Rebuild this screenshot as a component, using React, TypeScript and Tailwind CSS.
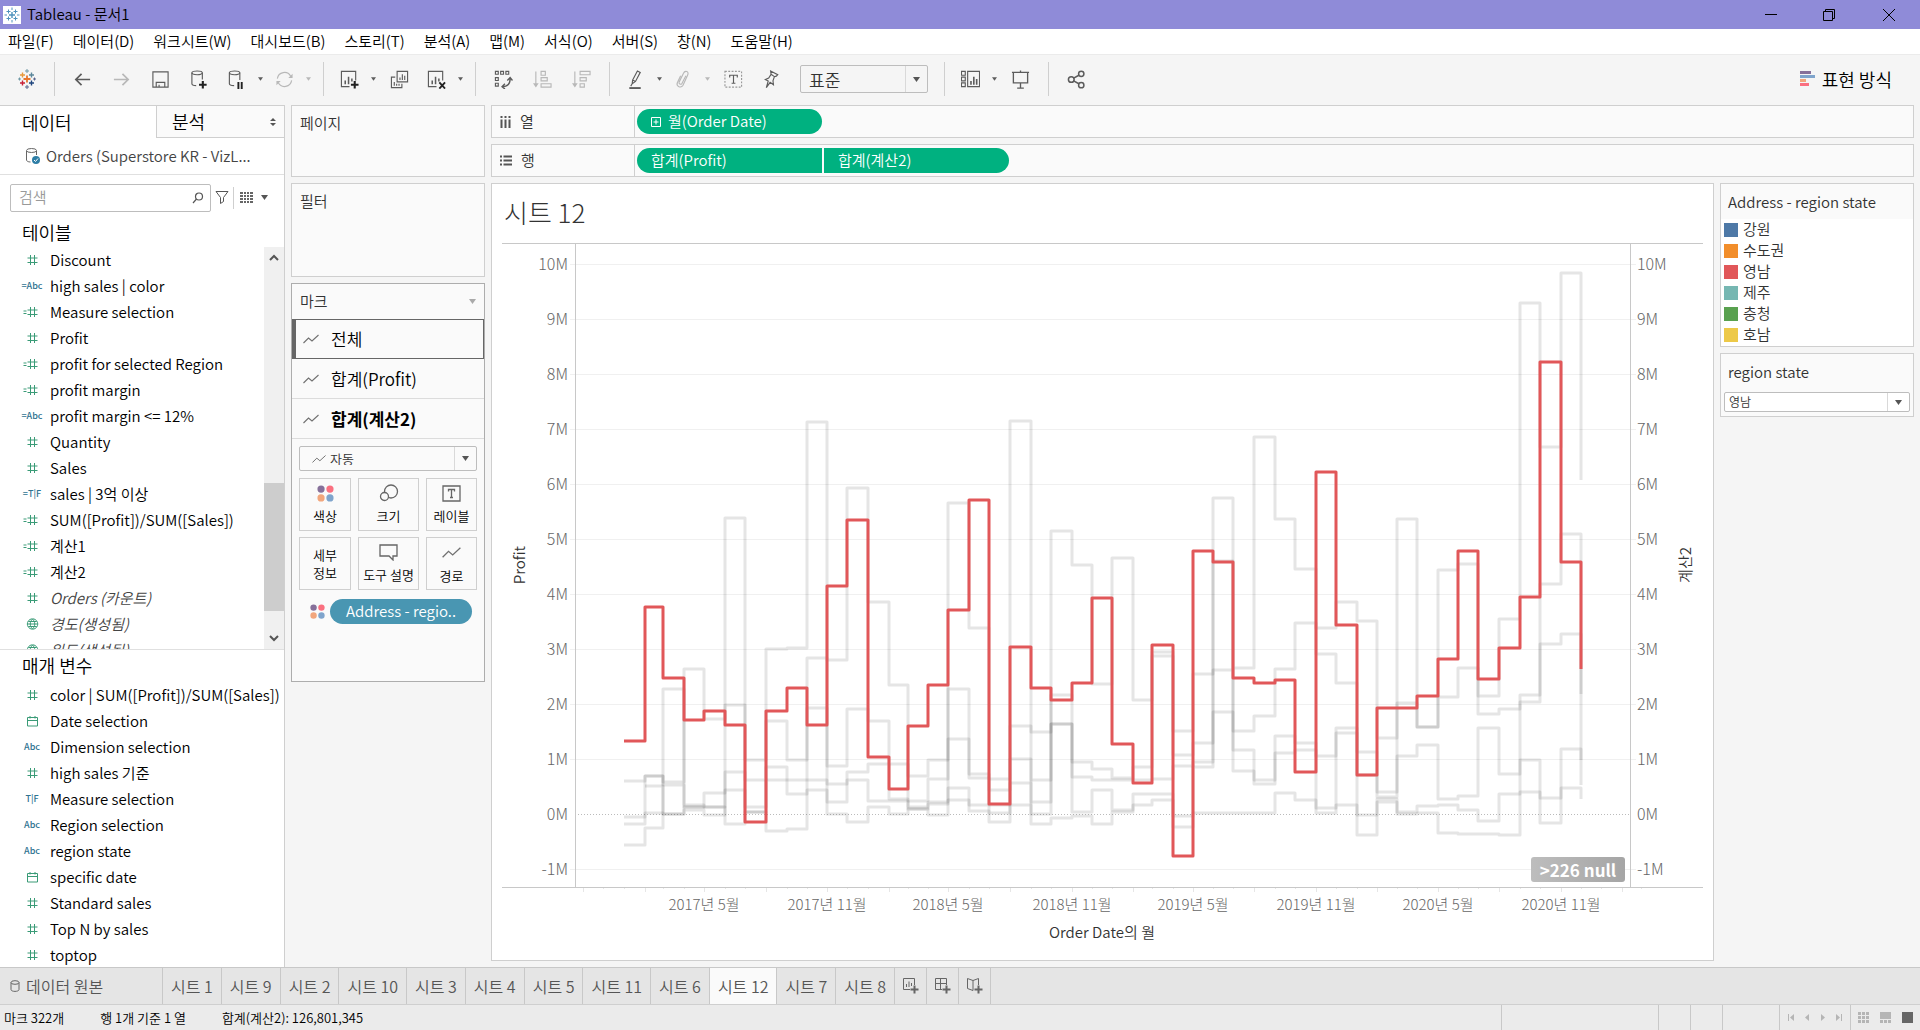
// App.tsx - Tableau-style worksheet: data pane, shelves, marks card and a dual-axis step chart.
import type { ReactNode } from "react";

const menus = [
  "파일(F)", "데이터(D)", "워크시트(W)", "대시보드(B)", "스토리(T)", "분석(A)",
  "맵(M)", "서식(O)", "서버(S)", "창(N)", "도움말(H)",
];

type FieldKind = "num" | "calcNum" | "abc" | "calcAbc" | "tf" | "calcTf" | "date" | "geo";
type Field = { kind: FieldKind; name: string; generated?: boolean };

const tableFields: Field[] = [
  { kind: "num", name: "Discount" },
  { kind: "calcAbc", name: "high sales | color" },
  { kind: "calcNum", name: "Measure selection" },
  { kind: "num", name: "Profit" },
  { kind: "calcNum", name: "profit for selected Region" },
  { kind: "calcNum", name: "profit margin" },
  { kind: "calcAbc", name: "profit margin <= 12%" },
  { kind: "num", name: "Quantity" },
  { kind: "num", name: "Sales" },
  { kind: "calcTf", name: "sales | 3억 이상" },
  { kind: "calcNum", name: "SUM([Profit])/SUM([Sales])" },
  { kind: "calcNum", name: "계산1" },
  { kind: "calcNum", name: "계산2" },
  { kind: "num", name: "Orders (카운트)", generated: true },
  { kind: "geo", name: "경도(생성됨)", generated: true },
  { kind: "geo", name: "위도(생성됨)", generated: true },
];

const parameters: Field[] = [
  { kind: "num", name: "color | SUM([Profit])/SUM([Sales])" },
  { kind: "date", name: "Date selection" },
  { kind: "abc", name: "Dimension selection" },
  { kind: "num", name: "high sales 기준" },
  { kind: "tf", name: "Measure selection" },
  { kind: "abc", name: "Region selection" },
  { kind: "abc", name: "region state" },
  { kind: "date", name: "specific date" },
  { kind: "num", name: "Standard sales" },
  { kind: "num", name: "Top N by sales" },
  { kind: "num", name: "toptop" },
];

const regions = [
  { name: "강원", swatch: "bg-[#4e79a7]" },
  { name: "수도권", swatch: "bg-[#f28e2b]" },
  { name: "영남", swatch: "bg-[#e15759]" },
  { name: "제주", swatch: "bg-[#76b7b2]" },
  { name: "충청", swatch: "bg-[#59a14f]" },
  { name: "호남", swatch: "bg-[#edc948]" },
];

const sheets = ["1", "9", "2", "10", "3", "4", "5", "11", "6", "12", "7", "8"];

// Monthly values in millions, January 2017 to December 2020.
const selectedRegion = [
  1.32, 3.76, 2.47, 1.7, 1.87, 1.62, -0.14, 1.87, 2.3, 1.62, 4.15, 5.34,
  1.04, 0.45, 1.6, 2.35, 3.7, 5.7, 0.19, 3.04, 2.3, 2.07, 2.39, 3.93,
  1.27, 0.57, 3.07, -0.77, 4.78, 4.58, 2.47, 2.39, 2.43, 0.76, 6.22, 3.44,
  0.7, 1.93, 1.93, 2.15, 2.82, 4.79, 2.45, 3.01, 3.95, 8.21, 4.58, 2.64,
];

const otherRegions: (number | null)[][] = [
  [
    0.6, 0.69, 0.58, 2.64, 1.73, 5.39, 0.99, 3.0, 3.01, 7.13, 0.87, 1.91,
    1.69, 0.91, 0.69, 0.98, 5.65, 3.39, 0.64, 7.14, 1.49, 5.15, 4.52, 2.36,
    4.66, 2.07, 2.95, 1.51, 2.54, 5.75, 2.65, 6.85, 5.36, 4.45, 3.39, 3.86,
    3.5, 1.38, 5.36, 1.59, 4.44, 4.55, 2.15, 3.55, 9.29, 6.67, 9.83, 6.08,
  ],
  [
    -0.56, -0.25, 2.27, 0.13, 0.39, 1.98, 0.62, 1.69, 0.98, 2.83, 2.8, 5.93,
    3.85, 2.34, 0.24, 0.64, 2.27, 0.73, 0.43, 1.6, 0.62, 2.17, 0.94, 0.81,
    0.65, 0.85, 2.87, 1.07, 1.29, 4.6, 1.51, 1.78, 2.64, 3.48, 2.91, 2.39,
    1.13, 0.4, 2.02, 1.59, 2.13, 2.65, 1.82, 1.91, 2.17, 4.19, 5.09, 2.19,
  ],
  [
    -0.18, 0.69, 0.52, 0.17, 0.13, 0.76, 0.13, 0.85, 0.36, 1.92, 0.54, 0.76,
    0.91, 0.27, 0.13, 0.21, 1.36, 0.65, 0.16, 1.0, 0.21, 1.64, 0.67, 0.61,
    0.61, 0.61, 0.63, 0.87, 0.94, 2.62, 1.16, 0.62, 1.41, 1.29, 1.05, 1.56,
    0.7, 0.31, 1.05, 1.25, 0.28, 0.33, 1.56, 0.72, 2.04, 3.09, 3.27, 0.99,
  ],
  [
    -0.05, 0.02, 0, 0.07, -0.02, 0.43, 0.04, 0.62, 0.62, 0.62, 0.21, 0.61,
    0.24, 0.24, 0.09, 0.19, 0.47, 0.16, 0.02, 0.56, 0, 1.64, 0.04, 0.43,
    0.07, 0.36, 0.36, -0.04, 0.85, 1.86, 0.78, 0.54, 1.1, 1.16, 0.11, 1.48,
    -0.02, 0.27, 0.04, 0.14, 0.16, 0.07, -0.13, 0.36, 0.98, 0.29, 1.19, 0.53,
  ],
  [
    null, 0.5, 0, 0.13, 0.13, -0.18, 0.04, -0.31, -0.28, 0.43, 0, -0.14,
    0.13, 0, 0.09, -0.02, 0.25, 0.05, -0.14, 0.17, -0.18, -0.08, -0.04, -0.18,
    0.03, 0.16, 0.26, -0.24, 0.02, 0.02, 0.02, 0.02, 0.38, 0.25, 0.02, 0.16,
    -0.38, 0.22, 0, 0.02, -0.35, -0.37, -0.37, -0.38, 0.4, -0.16, 0.47, 0.27,
  ],
];

const PLOT = { left: 73, right: 1128, bottom: 644, zero: 571, perMillion: 55 };
const DAY_MS = 86400000;
const monthX = (m: number) =>
  122 + Math.round(((Date.UTC(2017, m, 1) - Date.UTC(2017, 0, 1)) / DAY_MS) * 0.669);
const valueY = (v: number) => PLOT.zero - Math.round(v * PLOT.perMillion);

function stepPath(values: (number | null)[]) {
  let d = "";
  values.forEach((v, m) => {
    if (v === null) return;
    d += d === "" ? `M${monthX(m)} ${valueY(v)}` : `H${monthX(m)}V${valueY(v)}`;
  });
  return d;
}

function Caret({ small, className = "text-[#555]" }: { small?: boolean; className?: string }) {
  return (
    <svg width={small ? 5 : 7} height={small ? 4 : 5} viewBox="0 0 7 5" className={className} aria-hidden="true">
      <path d="M0 0h7L3.5 5z" fill="currentColor" />
    </svg>
  );
}

function Stroke({ children }: { children: ReactNode }) {
  return (
    <svg width="19" height="19" viewBox="0 0 20 20" fill="none" stroke="currentColor" strokeWidth="1.2" aria-hidden="true">
      {children}
    </svg>
  );
}

function ToolButton({ label, off, children }: { label: string; off?: boolean; children: ReactNode }) {
  return (
    <button aria-label={label} className={`flex h-8 w-[39px] items-center justify-center ${off ? "text-[#b8b8b8]" : "text-[#5c5c5c]"}`}>
      {children}
    </button>
  );
}

function SplitButton({ label, off, children }: { label: string; off?: boolean; children: ReactNode }) {
  return (
    <div className={`flex h-8 items-center ${off ? "text-[#b8b8b8]" : "text-[#5c5c5c]"}`}>
      <button aria-label={label} className="flex w-[34px] items-center justify-center">{children}</button>
      <button aria-label={`${label} 메뉴`} className="flex w-[14px] items-center justify-center">
        <Caret small className="text-current" />
      </button>
    </div>
  );
}

function Divider() {
  return <div className="mx-2 h-[34px] w-px bg-[#cfcfcf]" />;
}

function TableauMark() {
  return (
    <svg width="18" height="20" viewBox="0 0 18 20" strokeWidth="1.4" fill="none" aria-hidden="true">
      <path d="M9 6.5v7M5.5 10h7" stroke="#e8762d" strokeWidth="1.8" />
      <path d="M4.5 3.5v5M2 6h5" stroke="#e89a3c" />
      <path d="M13.5 3.5v5M11 6h5" stroke="#5b879b" />
      <path d="M4.5 11.5v5M2 14h5" stroke="#c72037" />
      <path d="M13.5 11.5v5M11 14h5" stroke="#1f457e" />
      <path d="M9 0v4M7 2h4M0 10h3M1.5 8.5v3" stroke="#7099a6" strokeWidth="1" />
      <path d="M9 16v4M7 18h4M15 10h3M16.5 8.5v3" stroke="#59658c" strokeWidth="1" />
    </svg>
  );
}

function ColorDots({ size }: { size: number }) {
  return (
    <svg width={size} height={size} viewBox="0 0 16 16" aria-hidden="true">
      <circle cx="3.8" cy="3.8" r="3.4" fill="#86709a" />
      <circle cx="12.2" cy="3.8" r="3.4" fill="#fa7080" />
      <circle cx="3.8" cy="12.2" r="3.4" fill="#f2a67c" />
      <circle cx="12.2" cy="12.2" r="3.4" fill="#7fa4cc" />
    </svg>
  );
}

function LineMark({ size = 16 }: { size?: number }) {
  return (
    <svg width={size} height={size} viewBox="0 0 16 16" fill="none" stroke="#707070" strokeWidth="1.1" aria-hidden="true">
      <path d="M.5 12l5-5 3.5 3 6.500-6" />
    </svg>
  );
}

function FieldIcon({ kind }: { kind: FieldKind }) {
  const calc = kind === "calcNum" || kind === "calcAbc" || kind === "calcTf";
  if (kind === "abc" || kind === "calcAbc" || kind === "tf" || kind === "calcTf") {
    const text = kind === "abc" || kind === "calcAbc" ? "Abc" : "T|F";
    return (
      <span className="w-6 text-center text-[9px] font-medium whitespace-nowrap text-[#2f7391]">
        {calc ? "=" : ""}
        {text}
      </span>
    );
  }
  return (
    <svg width="24" height="12" viewBox="0 0 24 12" fill="none" stroke="#3a9b77" strokeWidth="1" aria-hidden="true">
      {(kind === "num" || kind === "calcNum") && <path d="M10.5 1v10M14.5 1v10M7.5 4h10M7.5 8.5h10" />}
      {kind === "calcNum" && <path d="M3.5 5h3M3.5 7.5h3" />}
      {kind === "date" && <path d="M7.5 2.5h10v8.500h-10zM7.5 5.5h10M10 1v2.500M15 1v2.500" />}
      {kind === "geo" && <path d="M12.5 .8a5.200 5.200 0 1 0 .1 0M7.5 6h10M8.300 3.500h8.400M8.300 8.500h8.400M12.500 1c-3 3-3 7 0 10c3-3 3-7 0-10" />}
    </svg>
  );
}

function FieldList({ fields }: { fields: Field[] }) {
  return (
    <ul>
      {fields.map((field) => (
        <li key={field.name} className="flex h-[26px] items-center gap-1 pl-5">
          <span className="flex w-6 justify-center">
            <FieldIcon kind={field.kind} />
          </span>
          <span className={`pl-[2px] whitespace-nowrap ${field.generated ? "text-[#444] italic" : ""}`}>{field.name}</span>
        </li>
      ))}
    </ul>
  );
}

function TitleBar() {
  return (
    <header className="flex h-[29px] shrink-0 items-center justify-between bg-[#8f8bd8]">
      <div className="flex items-center gap-[6px] pl-[3px] text-[15px]">
        <span className="flex size-[18px] items-center justify-center bg-white">
          <svg width="16" height="16" viewBox="0 0 16 16" fill="none" stroke="#4f93bd" strokeWidth="1" aria-hidden="true">
            <path d="M8 5v6M5 8h6" strokeWidth="1.4" />
            <path d="M4.5 2.5v4M2.5 4.5h4M11.5 2.5v4M9.5 4.5h4M4.5 9.5v4M2.5 11.5h4M11.5 9.5v4M9.5 11.5h4M8 .5v2.500M8 13v2.500M.5 8h2.500M13 8h2.500" />
          </svg>
        </span>
        <h1>Tableau - 문서1</h1>
      </div>
      <div className="flex">
        <button aria-label="최소화" className="flex h-[29px] w-[58px] items-center justify-center">
          <svg width="12" height="12" stroke="#000" aria-hidden="true"><path d="M0 5.5h12" /></svg>
        </button>
        <button aria-label="이전 크기로 복원" className="flex h-[29px] w-[58px] items-center justify-center">
          <svg width="12" height="12" fill="none" stroke="#000" aria-hidden="true">
            <path d="M.5 2.5h9v9h-9zM2.5 2.5v-2h9v9h-2" />
          </svg>
        </button>
        <button aria-label="닫기" className="flex h-[29px] w-[62px] items-center justify-center">
          <svg width="12" height="12" stroke="#000" aria-hidden="true"><path d="M0 0l12 12M12 0L0 12" /></svg>
        </button>
      </div>
    </header>
  );
}

function Toolbar() {
  return (
    <div role="toolbar" className="flex h-[51px] shrink-0 items-center border-t border-[#ebebeb] pb-[2px] pl-[7px]">
      <ToolButton label="시작 페이지"><TableauMark /></ToolButton>
      <Divider />
      <ToolButton label="실행 취소">
        <Stroke><path d="M18 10H3M9 4l-6 6 6 6" strokeWidth="1.8" /></Stroke>
      </ToolButton>
      <ToolButton label="다시 실행" off>
        <Stroke><path d="M2 10h15M11 4l6 6-6 6" strokeWidth="1.8" /></Stroke>
      </ToolButton>
      <ToolButton label="저장">
        <Stroke><path d="M2 2h16v16H2zM5.500 18v-5h9v5M8.500 18v-2.500" /></Stroke>
      </ToolButton>
      <ToolButton label="새 데이터 원본">
        <Stroke>
          <ellipse cx="7.500" cy="3" rx="5.500" ry="2" />
          <path d="M2 3v11.500c0 1.200 2 2 4.500 2M13 3v7" />
          <path d="M13.500 11.500v8M9.500 15.500h8" stroke="#222" strokeWidth="2.200" />
        </Stroke>
      </ToolButton>
      <SplitButton label="자동 업데이트 일시 중지">
        <Stroke>
          <ellipse cx="8" cy="3" rx="5.500" ry="2" />
          <path d="M2.500 3v11.500c0 1.200 2 2 5 2M13.500 3v7.500" />
          <path d="M12 12.500v7.500M15.500 12.500v7.500" stroke="#222" strokeWidth="2" />
        </Stroke>
      </SplitButton>
      <SplitButton label="업데이트 실행" off>
        <Stroke>
          <path d="M2.500 9a7.500 7.500 0 0 1 14-2.500M17.500 11a7.500 7.500 0 0 1-14 2.500" />
          <path d="M18.500 4v4.500H14zM1.500 16v-4.500H6z" fill="currentColor" stroke="none" />
        </Stroke>
      </SplitButton>
      <Divider />
      <SplitButton label="새 워크시트">
        <Stroke>
          <path d="M10 17.500H1.500v-16h15V11" />
          <path d="M5.500 15v-4M9 15V7M12.500 12V9" strokeWidth="1.600" />
          <path d="M15.500 11.500v8M11.500 15.500h8" stroke="#222" strokeWidth="2.200" />
        </Stroke>
      </SplitButton>
      <ToolButton label="복제">
        <Stroke>
          <path d="M7.500 1.500h11v11h-11zM5.500 7.500H1.500v11h11V14.500" />
          <path d="M10.500 10.500V8M13 10.500V4.500M15.500 10.500V6M4.500 16.500v-4M7 16.500v-2M9.500 16.500v-2" />
        </Stroke>
      </ToolButton>
      <SplitButton label="시트 지우기">
        <Stroke>
          <path d="M10 17.500H1.500v-16h15V11" />
          <path d="M5.500 15v-4M9 15V7M12.500 12V9" strokeWidth="1.600" />
          <path d="M13 13l6 6.500M19 13l-6 6.500" stroke="#222" strokeWidth="2" />
        </Stroke>
      </SplitButton>
      <Divider />
      <ToolButton label="행과 열 바꾸기">
        <Stroke>
          <path d="M1.500 1.500h3v3h-3zM7 1.500h3v3H7zM12.500 1.500h3v3h-3zM1.500 8h3v3h-3zM1.500 14h3v3h-3z" />
          <path d="M17 9c0 5-2.500 8.500-8 8.500M14 11l3-3 2.500 3M11.500 14.500l-3 3 3 2.500" strokeWidth="1.500" />
        </Stroke>
      </ToolButton>
      <ToolButton label="오름차순 정렬" off>
        <Stroke>
          <path d="M3 1.500v14M8.500 1.500h4.500v4H8.500zM8.500 8h6.500v3.500H8.500zM8.500 14.500h10.500v3.500H8.500z" />
          <path d="M0 14h6l-3 4.500z" fill="currentColor" stroke="none" />
        </Stroke>
      </ToolButton>
      <ToolButton label="내림차순 정렬" off>
        <Stroke>
          <path d="M3 1.500v14M8.500 1.500h10.500v3.500H8.500zM8.500 8h6.500v3.500H8.500zM8.500 14.500h4.500v3.500H8.500z" />
          <path d="M0 14h6l-3 4.500z" fill="currentColor" stroke="none" />
        </Stroke>
      </ToolButton>
      <Divider />
      <SplitButton label="강조 표시">
        <Stroke>
          <path d="M7 10.500L12 1l3 1.500L10 12l-3.500 2.500zM7 10.500l3 1.500M6.500 14.500L5 17" />
          <path d="M3.500 19h12" strokeWidth="2" />
        </Stroke>
      </SplitButton>
      <SplitButton label="그룹 멤버" off>
        <Stroke><path d="M12.500 6l-4 8c-1.500 2-4 .5-3-1.500l4.500-9C11.500 0 16 1.500 14.500 5l-5 11c-2 3.500-7.500 1.500-6-2.500l3.500-7.500" /></Stroke>
      </SplitButton>
      <ToolButton label="마크 레이블 표시">
        <Stroke>
          <path d="M1 1.500h17.500v16.500H1z" strokeDasharray="2 1.500" stroke="#999" />
          <path d="M6 8V5.500h8V8M10 5.500V14M8 14h4" />
        </Stroke>
      </ToolButton>
      <ToolButton label="축 고정">
        <Stroke><path d="M8 1l7.500 4-1.500 1.500-2 .5-1.500 4.500.5 4-3.500-2.500-4 5.500 2-7-3-1.500 3.500-1.500L8.500 4.500zM8.500 4.500L12 7" /></Stroke>
      </ToolButton>
      <SelectBox label="맞춤" value="표준" className="ml-2 h-[28px] w-[128px] border-[#bdbdbd] bg-[#f5f5f5] text-[17px]" inset="pl-2" arrow="w-[22px]" />
      <div className="ml-2">
        <Divider />
      </div>
      <SplitButton label="카드 표시/숨기기">
        <Stroke>
          <path d="M.500 1.500h4v4h-4zM.500 7.500h4v4h-4zM.500 13.500h4v4h-4zM7 1.500h12.500v16H7z" />
          <path d="M10.500 15.500v-4M13.500 15.500V7M16.500 15.500V9.500" strokeWidth="1.700" />
        </Stroke>
      </SplitButton>
      <ToolButton label="프레젠테이션 모드">
        <Stroke><path d="M1 2.500h18M2.500 2.500v11h15v-11M10 .5v2M10 13.500V19M6.500 19h7" strokeWidth="1.400" /></Stroke>
      </ToolButton>
      <Divider />
      <ToolButton label="공유">
        <Stroke>
          <circle cx="4.500" cy="10" r="3" strokeWidth="1.600" />
          <circle cx="15" cy="4" r="2.800" strokeWidth="1.600" />
          <circle cx="15" cy="16" r="2.800" strokeWidth="1.600" />
          <path d="M7 8.500l5.500-3M7 11.500l5.500 3" strokeWidth="1.600" />
        </Stroke>
      </ToolButton>
      <button className="mr-[28px] ml-auto flex items-center gap-[7px] text-[18px]">
        <svg width="15" height="16" aria-hidden="true">
          <path d="M0 0h11v3H0z" fill="#86709a" />
          <path d="M0 4h15v3H0z" fill="#7fa4cc" />
          <path d="M0 8h6v3H0z" fill="#f2a67c" />
          <path d="M0 12h9v3H0z" fill="#fa7080" />
        </svg>
        표현 방식
      </button>
    </div>
  );
}

type SelectBoxProps = { label: string; value: string; className: string; inset: string; arrow: string; icon?: ReactNode };

function SelectBox({ label, value, className, inset, arrow, icon }: SelectBoxProps) {
  return (
    <div className={`relative flex items-stretch rounded-[2px] border ${className}`}>
      {icon && <span className="flex items-center pl-3">{icon}</span>}
      <select aria-label={label} className={`min-w-0 flex-1 appearance-none bg-transparent leading-none text-[#333] ${inset}`}>
        <option>{value}</option>
      </select>
      <span className={`pointer-events-none flex items-center justify-center border-l border-[#d9d9d9] ${arrow}`}>
        <Caret />
      </span>
    </div>
  );
}

function DataPane() {
  return (
    <aside className="flex w-[285px] shrink-0 flex-col border-t border-r border-[#cfcfcf] bg-white text-[15px]">
      <div className="flex h-[32px] shrink-0 text-[18px]">
        <button className="w-[156px] pl-[22px] text-left whitespace-nowrap">데이터</button>
        <button className="flex flex-1 items-center justify-between border-b border-l border-[#cfcfcf] bg-[#fafafa] pr-2 pl-[15px]">
          분석
          <svg width="6" height="8" fill="#555" aria-hidden="true"><path d="M0 3l3-3 3 3zM0 5l3 3 3-3z" /></svg>
        </button>
      </div>
      <button className="flex h-[37px] shrink-0 items-center gap-[6px] border-b border-[#e0e0e0] pl-[26px] text-[#444]">
        <svg width="14" height="16" viewBox="0 0 14 16" fill="none" stroke="#666" aria-hidden="true">
          <path d="M.5 3v9c0 1 1.500 2 4 2M10.500 3v4" />
          <ellipse cx="5.500" cy="2.500" rx="5" ry="2" />
          <circle cx="10" cy="12" r="4" fill="#2e7ea6" stroke="none" />
          <path d="M8 12l1.500 1.500 2.500-3" stroke="#fff" />
        </svg>
        Orders (Superstore KR - VizL...
      </button>
      <div className="flex h-[45px] shrink-0 items-center pl-[10px]">
        <label className="flex h-[28px] w-[201px] items-center rounded-[2px] border border-[#bdbdbd] pr-[6px] pl-2">
          <input type="search" aria-label="검색" placeholder="검색" className="min-w-0 flex-1 outline-none placeholder:text-[#999]" />
          <svg width="12" height="12" fill="none" stroke="#555" strokeWidth="1.200" aria-hidden="true">
            <circle cx="7" cy="4.500" r="3.500" />
            <path d="M4.500 7L1 11" />
          </svg>
        </label>
        <button aria-label="필터" className="flex h-[22px] w-[23px] items-center justify-center border-r border-[#cfcfcf]">
          <svg width="14" height="13" fill="none" stroke="#555" aria-hidden="true"><path d="M1 .5h12l-4.500 6v4l-3 2v-6z" /></svg>
        </button>
        <button aria-label="보기 방식" className="flex items-center gap-2 pl-[6px]">
          <svg width="13" height="11" fill="#666" aria-hidden="true">
            <path d="M0 0h3v2H0zM4 0h2v2H4zM7 0h2v2H7zM10 0h3v2h-3zM0 3h3v2H0zM4 3h2v2H4zM7 3h2v2H7zM10 3h3v2h-3zM0 6h3v2H0zM4 6h2v2H4zM7 6h2v2H7zM10 6h3v2h-3zM0 9h3v2H0zM4 9h2v2H4zM7 9h2v2H7zM10 9h3v2h-3z" />
          </svg>
          <Caret />
        </button>
      </div>
      <h2 className="h-[27px] shrink-0 pl-[22px] text-[18px] leading-6">테이블</h2>
      <div className="flex h-[403px] shrink-0 border-b border-[#e0e0e0]">
        <div className="flex-1 overflow-hidden">
          <FieldList fields={tableFields} />
        </div>
        <div className="flex w-5 flex-col items-center justify-between bg-[#f0f0f0] text-[#555]">
          <svg width="10" height="20" fill="none" stroke="currentColor" strokeWidth="2" aria-hidden="true"><path d="M1 13l4-4 4 4" /></svg>
          <div className="mt-auto h-[128px] w-full bg-[#cdcdcd]" />
          <svg width="10" height="38" fill="none" stroke="currentColor" strokeWidth="2" aria-hidden="true"><path d="M1 25l4 4 4-4" /></svg>
        </div>
      </div>
      <h2 className="h-[32px] shrink-0 pl-[22px] text-[18px] leading-[30px]">매개 변수</h2>
      <div className="min-h-0 flex-1 overflow-hidden">
        <FieldList fields={parameters} />
      </div>
    </aside>
  );
}

function MarkTile({ label, children }: { label: ReactNode; children?: ReactNode }) {
  return (
    <button className="flex h-[53px] flex-col items-center justify-center gap-[5px] border border-[#cfcfcf] text-[13px] leading-[18px] whitespace-nowrap">
      {children}
      <span>{label}</span>
    </button>
  );
}

function CardColumn() {
  return (
    <div className="ml-[6px] flex w-[194px] shrink-0 flex-col gap-[6px] text-[15px] text-[#333]">
      <section className="h-[72px] border border-[#cfcfcf] bg-[#fafafa] px-2 py-[6px]">페이지</section>
      <section className="h-[94px] border border-[#cfcfcf] bg-[#fafafa] px-2 py-[6px]">필터</section>
      <section className="flex h-[399px] flex-col border border-[#adadad] bg-[#fafafa]">
        <div className="flex h-[35px] items-center justify-between px-2">
          마크
          <Caret className="text-[#aaa]" />
        </div>
        <div className="text-[17px] text-black">
          <button className="flex h-[40px] w-full items-center gap-[12px] border border-l-4 border-[#666] pl-[7px]">
            <LineMark />
            전체
          </button>
          <button className="flex h-[40px] w-full items-center gap-[12px] border-b border-[#dcdcdc] pl-[11px]">
            <LineMark />
            합계(Profit)
          </button>
          <button className="flex h-[40px] w-full items-center gap-[12px] border-b border-[#dcdcdc] pl-[11px] font-bold">
            <LineMark />
            합계(계산2)
          </button>
        </div>
        <SelectBox label="마크 유형" value="자동" className="mx-[7px] mt-[7px] h-[25px] border-[#bdbdbd] text-[13px]" inset="pl-1" arrow="w-[22px]" icon={<LineMark size={14} />} />
        <div className="mx-[7px] mt-[7px] grid grid-cols-[52px_61px_51px] justify-between gap-y-[6px] text-black">
          <MarkTile label="색상"><ColorDots size={17} /></MarkTile>
          <MarkTile label="크기">
            <svg width="20" height="18" fill="none" stroke="#666" strokeWidth="1.300" aria-hidden="true">
              <circle cx="12" cy="7.500" r="6.500" />
              <circle cx="5.500" cy="12.500" r="4" fill="#fafafa" />
            </svg>
          </MarkTile>
          <MarkTile label="레이블">
            <svg width="19" height="17" fill="none" stroke="#666" strokeWidth="1.300" aria-hidden="true">
              <path d="M1 1h17v15H1zM6.500 6.500v-2h6v2M9.500 4.500v8M8 12.500h3" />
            </svg>
          </MarkTile>
          <MarkTile label={<>세부<br />정보</>} />
          <MarkTile label="도구 설명">
            <svg width="19" height="17" fill="none" stroke="#666" strokeWidth="1.300" aria-hidden="true">
              <path d="M1 1h17v11h-4v4l-4-4H1z" />
            </svg>
          </MarkTile>
          <MarkTile label="경로"><LineMark size={19} /></MarkTile>
        </div>
        <div className="mt-[9px] flex items-center gap-[5px] pl-[18px]">
          <ColorDots size={15} />
          <button className="h-[25px] w-[142px] rounded-full bg-[#4996b2] text-[15px] text-white">Address - regio..</button>
        </div>
      </section>
    </div>
  );
}

function Shelf({ name, icon, children }: { name: string; icon: ReactNode; children: ReactNode }) {
  return (
    <div className="flex h-[33px] border border-[#cfcfcf] bg-[#fafafa] text-[15px] text-[#333]">
      <div className="flex w-[143px] items-center gap-[9px] border-r border-[#cfcfcf] pl-2">
        {icon}
        {name}
      </div>
      <div className="flex items-center gap-[2px] pl-[2px] text-white">{children}</div>
    </div>
  );
}

const VALUE_TICKS = [10, 9, 8, 7, 6, 5, 4, 3, 2, 1, 0, -1];
const MONTH_LABELS = [4, 10, 16, 22, 28, 34, 40, 46];

function StepChart() {
  return (
    <div className="relative">
      <svg viewBox="0 0 1201 700" className="block w-full" role="img" aria-label="Order Date의 월별 Profit 및 계산2">
        <g stroke="#f0f0f0">
          {VALUE_TICKS.filter((v) => v !== 0).map((v) => (
            <path key={v} d={`M${PLOT.left - 5} ${valueY(v) + 0.5}H${PLOT.right + 6}`} />
          ))}
        </g>
        <path d={`M${PLOT.left} ${PLOT.zero + 0.5}H${PLOT.right}`} stroke="#bbb" strokeDasharray="1 2" />
        <g stroke="#e6e6e6">
          {Array.from({ length: 53 }, (_, i) => i - 2).map((m) => (
            <path key={m} d={`M${monthX(m) + 0.5} 645v${(m + 2) % 3 === 0 ? 4 : 1}`} />
          ))}
        </g>
        <g fill="none" strokeWidth="3" strokeLinejoin="round">
          {otherRegions.map((values, i) => (
            <path key={i} d={stepPath(values)} stroke="#000" strokeOpacity="0.1" />
          ))}
          <path d={stepPath(selectedRegion)} stroke="#e15759" />
        </g>
        <path d={`M0 .5H1201M0 644.5H1201M${PLOT.left + 0.5} 0V644M${PLOT.right + 0.5} 0V644`} stroke="#c8c8c8" />
        <g fill="#666" className="text-[16px] font-light">
          {VALUE_TICKS.map((v) => (
            <g key={v}>
              <text x={PLOT.left - 7} y={valueY(v) + 6} textAnchor="end">{`${v}M`}</text>
              <text x={PLOT.right + 7} y={valueY(v) + 6}>{`${v}M`}</text>
            </g>
          ))}
        </g>
        <g fill="#666" className="text-[15px] font-light">
          {MONTH_LABELS.map((m) => (
            <text key={m} x={monthX(m)} y="667" textAnchor="middle">
              {`${2017 + Math.floor(m / 12)}년 ${(m % 12) + 1}월`}
            </text>
          ))}
        </g>
        <g fill="#333" textAnchor="middle" className="text-[15px]">
          <text x="600" y="695">Order Date의 월</text>
          <text transform="translate(23 322) rotate(-90)">Profit</text>
          <text transform="translate(1189 322) rotate(-90)">계산2</text>
        </g>
      </svg>
      <button className="absolute right-[78px] bottom-[61px] h-[25px] w-[94px] rounded-[3px] bg-linear-to-r from-[#bdbdbd] to-[#a5a5a5] text-[17px] leading-none font-bold text-white">
        &gt;226 null
      </button>
    </div>
  );
}

function SheetArea() {
  return (
    <div className="mr-[6px] ml-[6px] flex min-w-0 flex-1 flex-col gap-[6px]">
      <Shelf
        name="열"
        icon={
          <svg width="11" height="12" stroke="#555" strokeWidth="2" aria-hidden="true">
            <path d="M1.500 0v2M5.500 0v2M9.500 0v2M1.500 3.500V12M5.500 3.500V12M9.500 3.500V12" />
          </svg>
        }
      >
        <button className="flex h-[25px] w-[185px] items-center gap-[7px] rounded-full bg-[#00b180] pl-[14px]">
          <svg width="10" height="10" fill="none" stroke="#fff" aria-hidden="true"><path d="M.5.5h9v9h-9zM5 2.5v5M2.5 5h5" /></svg>
          월(Order Date)
        </button>
      </Shelf>
      <Shelf
        name="행"
        icon={
          <svg width="12" height="11" stroke="#555" strokeWidth="2" aria-hidden="true">
            <path d="M0 1.500h2M0 5.500h2M0 9.500h2M3.500 1.500H12M3.500 5.500H12M3.500 9.500H12" />
          </svg>
        }
      >
        <button className="h-[25px] w-[185px] rounded-l-full bg-[#00b180] pl-[14px] text-left">합계(Profit)</button>
        <button className="h-[25px] w-[185px] rounded-r-full bg-[#00b180] pl-[14px] text-left">합계(계산2)</button>
      </Shelf>
      <div className="flex min-h-0 flex-1 gap-[6px]">
        <main className="min-w-0 flex-1 border border-[#cfcfcf] bg-white px-[10px]">
          <h2 className="flex h-[59px] items-center pb-1 pl-[2px] text-[26px] font-light text-[#333]">시트 12</h2>
          <StepChart />
        </main>
        <div className="flex w-[194px] flex-col gap-[6px] text-[15px] text-[#333]">
          <section className="border border-[#cfcfcf] bg-white pb-px">
            <h3 className="h-[35px] bg-[#fafafa] pl-[7px] leading-[36px]">Address - region state</h3>
            <ul className="pl-[3px]">
              {regions.map((region) => (
                <li key={region.name} className="flex h-[21px] items-center gap-[5px]">
                  <span className={`size-[14px] ${region.swatch}`} />
                  {region.name}
                </li>
              ))}
            </ul>
          </section>
          <section className="h-[64px] border border-[#cfcfcf] bg-[#fafafa]">
            <h3 className="h-[38px] pl-[7px] leading-[36px]">region state</h3>
            <SelectBox label="region state" value="영남" className="mx-[3px] h-[20px] border-[#bdbdbd] bg-white text-[12px]" inset="pl-1" arrow="w-[22px]" />
          </section>
        </div>
      </div>
    </div>
  );
}

function SheetTabs() {
  return (
    <nav className="flex h-[37px] shrink-0 border-t border-[#c8c8c8] bg-[#e5e5e5] text-[16px] text-[#555]">
      <button className="flex w-[163px] items-center gap-[6px] border-r border-[#c8c8c8] pl-[10px]">
        <svg width="10" height="12" fill="none" stroke="#666" aria-hidden="true">
          <path d="M1 2.500v7c0 2.500 8 2.500 8 0v-7" />
          <ellipse cx="5" cy="2.500" rx="4" ry="1.800" />
        </svg>
        데이터 원본
      </button>
      {sheets.map((n) => (
        <button key={n} className={`border-r border-[#c8c8c8] px-2 whitespace-nowrap ${n === "12" ? "bg-[#fafafa]" : ""}`}>
          시트 {n}
        </button>
      ))}
      <button aria-label="새 워크시트" className="flex w-8 items-center justify-center border-r border-[#c8c8c8]">
        <svg width="16" height="16" fill="none" stroke="#666" aria-hidden="true">
          <path d="M7 11.500H.5V.5h11V7M3.500 9V6M6 9V3.500M8.500 8V5" />
          <path d="M11.500 7.500v8M7.500 11.500h8" strokeWidth="2" />
        </svg>
      </button>
      <button aria-label="새 대시보드" className="flex w-8 items-center justify-center border-r border-[#c8c8c8]">
        <svg width="16" height="16" fill="none" stroke="#666" aria-hidden="true">
          <path d="M7 11.500H.5V.5h11V7M5.500.5v11M.5 5.500h11" />
          <path d="M11.500 7.500v8M7.500 11.500h8" strokeWidth="2" />
        </svg>
      </button>
      <button aria-label="새 스토리" className="flex w-8 items-center justify-center border-r border-[#c8c8c8]">
        <svg width="16" height="16" fill="none" stroke="#666" aria-hidden="true">
          <path d="M6 12.500l-5.500-2V.5L6 2.500zM6 2.500l5.500-2V7" />
          <path d="M11.500 7.500v8M7.500 11.500h8" strokeWidth="2" />
        </svg>
      </button>
    </nav>
  );
}

function StatusBar() {
  return (
    <footer className="flex h-[26px] shrink-0 items-stretch border-t border-[#cfcfcf] bg-[#ebebeb] text-[13px]">
      <div className="flex items-center gap-9 pl-1">
        <span>마크 322개</span>
        <span>행 1개 기준 1 열</span>
        <span>합계(계산2): 126,801,345</span>
      </div>
      <div className="ml-auto flex text-[#b5b5b5]">
        <div className="w-[157px] border-l border-[#c8c8c8]" />
        <div className="w-8 border-l border-[#c8c8c8]" />
        <div className="w-8 border-l border-[#c8c8c8]" />
        <div className="w-[57px] border-l border-[#c8c8c8]" />
        <div className="flex w-[71px] items-center justify-center gap-[10px] border-l border-[#c8c8c8]">
          <button aria-label="처음"><svg width="6" height="7" fill="currentColor"><path d="M0 0h1v7H0zM6 0v7L2 3.500z" /></svg></button>
          <button aria-label="이전"><svg width="6" height="7" fill="currentColor"><path d="M5 0v7L1 3.500z" /></svg></button>
          <button aria-label="다음"><svg width="6" height="7" fill="currentColor"><path d="M1 0v7l4-3.500z" /></svg></button>
          <button aria-label="마지막"><svg width="6" height="7" fill="currentColor"><path d="M5 0h1v7H5zM0 0v7l4-3.500z" /></svg></button>
        </div>
        <div className="flex w-[70px] items-center justify-center gap-[11px] border-l border-[#c8c8c8]">
          <button aria-label="시트 정렬기 표시">
            <svg width="11" height="11" fill="currentColor"><path d="M0 0h3v3H0zM4 0h3v3H4zM8 0h3v3H8zM0 4h3v3H0zM4 4h3v3H4zM8 4h3v3H8zM0 8h3v3H0zM4 8h3v3H4zM8 8h3v3H8z" /></svg>
          </button>
          <button aria-label="필름 스트립 표시">
            <svg width="11" height="11" fill="currentColor"><path d="M0 0h11v7H0zM0 8h3v3H0zM4 8h3v3H4zM8 8h3v3H8z" /></svg>
          </button>
          <button aria-label="탭 표시" className="size-[11px] bg-[#666]" />
        </div>
      </div>
    </footer>
  );
}

export default function App() {
  return (
    <div className="flex h-screen flex-col bg-[#f5f5f5] font-['Noto_Sans_CJK_KR',sans-serif] font-[350] text-black">
      <TitleBar />
      <nav className="flex h-[25px] shrink-0 items-center gap-[19px] bg-white pl-2 text-[15px]">
        {menus.map((menu) => (
          <button key={menu}>{menu}</button>
        ))}
      </nav>
      <Toolbar />
      <div className="flex min-h-0 flex-1">
        <DataPane />
        <div className="flex min-w-0 flex-1 pb-[6px]">
          <CardColumn />
          <SheetArea />
        </div>
      </div>
      <SheetTabs />
      <StatusBar />
    </div>
  );
}
